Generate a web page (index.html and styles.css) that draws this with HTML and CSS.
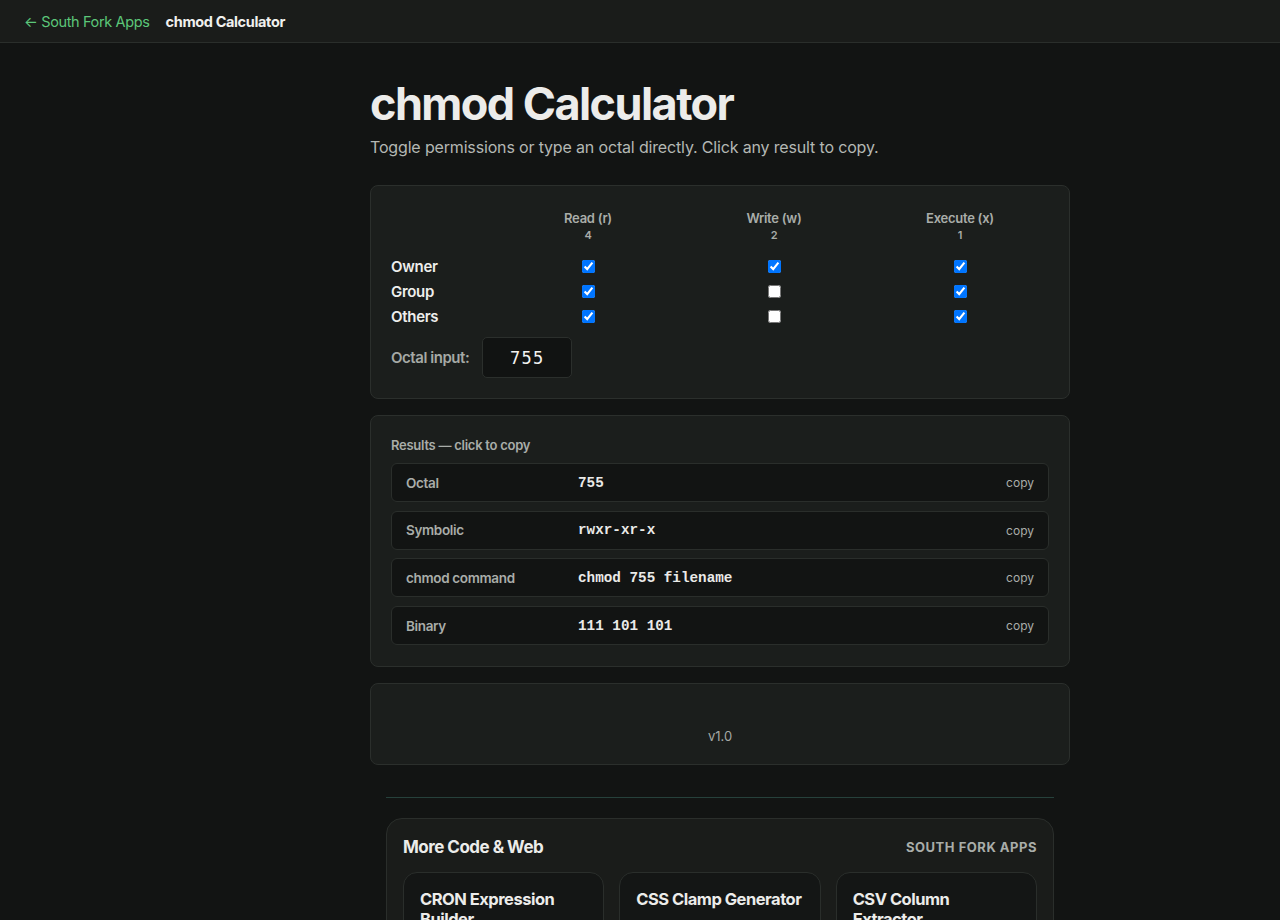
FILE: index.html
```html
<!DOCTYPE html>
<html lang="en">
<head>
<meta charset="UTF-8">
<meta name="viewport" content="width=device-width, initial-scale=1.0">
<title>chmod Calculator</title>
<link rel="stylesheet" href="styles.css">
</head>
<body>
  <header class="topbar">
    <a class="back" href="#">&larr; South Fork Apps</a>
    <span class="crumb">chmod Calculator</span>
  </header>

  <main class="page">
    <h1>chmod Calculator</h1>
    <p class="lede">Toggle permissions or type an octal directly. Click any result to copy.</p>

    <section class="card">
      <table class="perms">
        <thead>
          <tr>
            <th></th>
            <th>Read (r)<span>4</span></th>
            <th>Write (w)<span>2</span></th>
            <th>Execute (x)<span>1</span></th>
          </tr>
        </thead>
        <tbody>
          <tr>
            <td class="who">Owner</td>
            <td><input type="checkbox" checked></td>
            <td><input type="checkbox" checked></td>
            <td><input type="checkbox" checked></td>
          </tr>
          <tr>
            <td class="who">Group</td>
            <td><input type="checkbox" checked></td>
            <td><input type="checkbox"></td>
            <td><input type="checkbox" checked></td>
          </tr>
          <tr>
            <td class="who">Others</td>
            <td><input type="checkbox" checked></td>
            <td><input type="checkbox"></td>
            <td><input type="checkbox" checked></td>
          </tr>
        </tbody>
      </table>
      <div class="octal">
        <label for="octal">Octal input:</label>
        <input id="octal" type="text" value="755" maxlength="4">
      </div>
    </section>

    <section class="card results">
      <h3 class="results-title">Results — click to copy</h3>
      <div class="result">
        <span class="key">Octal</span>
        <code>755</code>
        <span class="copy">copy</span>
      </div>
      <div class="result">
        <span class="key">Symbolic</span>
        <code>rwxr-xr-x</code>
        <span class="copy">copy</span>
      </div>
      <div class="result">
        <span class="key">chmod command</span>
        <code>chmod 755 filename</code>
        <span class="copy">copy</span>
      </div>
      <div class="result">
        <span class="key">Binary</span>
        <code>111 101 101</code>
        <span class="copy">copy</span>
      </div>
    </section>

    <section class="card version">
      <span>v1.0</span>
    </section>

    <hr class="divider">

    <section class="more">
      <div class="more-head">
        <h2>More Code &amp; Web</h2>
        <span class="brand">SOUTH FORK APPS</span>
      </div>
      <div class="more-grid">
        <a class="tool" href="#">CRON Expression Builder</a>
        <a class="tool" href="#">CSS Clamp Generator</a>
        <a class="tool" href="#">CSV Column Extractor</a>
      </div>
    </section>
  </main>
</body>
</html>
```

FILE: styles.css
```css
body {
  margin: 0;
  background: #121413;
  color: #e8e9e7;
  font-family: Inter, "Noto Sans", sans-serif;
}

.topbar {
  display: flex;
  align-items: center;
  gap: 16px;
  height: 42px;
  padding: 0 24px;
  background: #1a1c1a;
  border-bottom: 1px solid #2a2e2b;
  font-size: 14.5px;
  letter-spacing: -0.025em;
}

.back {
  color: #5cc779;
  text-decoration: none;
}

.crumb {
  font-weight: 700;
  color: #f0f0ee;
}

/* content column sits right of centre, leaving room for an empty left rail */
.page {
  width: 700px;
  margin: 0 auto;
  padding: 34px 0 0 160px;
}

h1 {
  margin: 0;
  font-size: 45px;
  line-height: 54px;
  font-weight: 700;
  letter-spacing: -0.035em;
  color: #ececea;
}

.lede {
  margin: 6px 0 28px;
  font-size: 16px;
  color: #b4b8b4;
  letter-spacing: -0.01em;
}

.card {
  background: #1b1e1c;
  border: 1px solid #2b2f2c;
  border-radius: 8px;
  padding: 20px;
  margin-bottom: 16px;
}

/* permission grid */
.perms {
  width: 662px;
  table-layout: fixed;
  border-collapse: collapse;
}

.perms th {
  font-size: 13px;
  font-weight: 600;
  color: #a9ada9;
  padding: 4px 0 12px;
  width: 186px;
  letter-spacing: -0.02em;
}

.perms th:first-child {
  width: 104px;
}

.perms th span {
  display: block;
  font-size: 11px;
  margin-top: 2px;
}

.perms td {
  text-align: center;
  height: 25px;
  padding: 0;
}

.perms td.who {
  text-align: left;
  font-size: 15px;
  font-weight: 600;
  color: #eeeeec;
  letter-spacing: -0.02em;
}

.perms input {
  margin: 0;
  width: 13px;
  height: 13px;
}

.octal {
  display: flex;
  align-items: center;
  gap: 13px;
  margin-top: 8px;
}

.octal label {
  font-size: 15px;
  font-weight: 600;
  color: #a5a9a5;
  letter-spacing: -0.03em;
}

.octal input {
  box-sizing: border-box;
  width: 90px;
  height: 41px;
  background: #111312;
  border: 1px solid #2b2f2c;
  border-radius: 5px;
  color: #f2f2f0;
  font-family: "DejaVu Sans Mono", monospace;
  font-size: 17px;
  text-align: center;
  letter-spacing: 0.08em;
}

/* results */
.results {
  padding-bottom: 21px;
}

.results-title {
  margin: 1px 0 10px;
  font-size: 13px;
  font-weight: 600;
  color: #a9ada9;
  letter-spacing: -0.02em;
}

.result {
  display: flex;
  align-items: center;
  height: 37px;
  padding: 0 14px;
  margin-bottom: 8.7px;
  background: #121413;
  border: 1px solid #2a2e2b;
  border-radius: 6px;
}

.result:last-child {
  margin-bottom: 0;
}

.result .key {
  width: 172px;
  font-size: 13.5px;
  font-weight: 600;
  color: #a9ada9;
  letter-spacing: -0.025em;
}

.result code {
  flex: 1;
  font-family: "Liberation Mono", "Courier New", monospace;
  font-size: 14.3px;
  font-weight: 700;
  color: #eaeae8;
}

.result .copy {
  font-size: 12px;
  color: #a9ada9;
}

.version {
  height: 40px;
  display: flex;
  align-items: flex-end;
  justify-content: center;
  font-size: 13px;
  color: #a5a9a5;
}

.divider {
  margin: 32px 16px 20px;
  border: 0;
  border-top: 1px solid #26413b;
}

/* related tools */
.more {
  margin: 0 16px;
  padding: 18px 16px 16px;
  background: #1a1c1a;
  border: 1px solid #2a2e2b;
  border-radius: 16px;
}

.more-head {
  display: flex;
  justify-content: space-between;
  align-items: center;
  margin-bottom: 15px;
}

.more-head h2 {
  margin: 0;
  font-size: 17px;
  font-weight: 700;
  letter-spacing: -0.03em;
  color: #ececea;
}

.brand {
  font-size: 13px;
  font-weight: 700;
  letter-spacing: 0.04em;
  color: #a9ada9;
}

.more-grid {
  display: grid;
  grid-template-columns: repeat(3, 1fr);
  gap: 15px;
}

.tool {
  display: block;
  min-height: 80px;
  padding: 17px 15px 16px 16px;
  background: #141615;
  border: 1px solid #2a2e2b;
  border-radius: 14px;
  font-size: 16.5px;
  font-weight: 700;
  line-height: 1.2;
  letter-spacing: -0.03em;
  color: #ececea;
  text-decoration: none;
}
```
